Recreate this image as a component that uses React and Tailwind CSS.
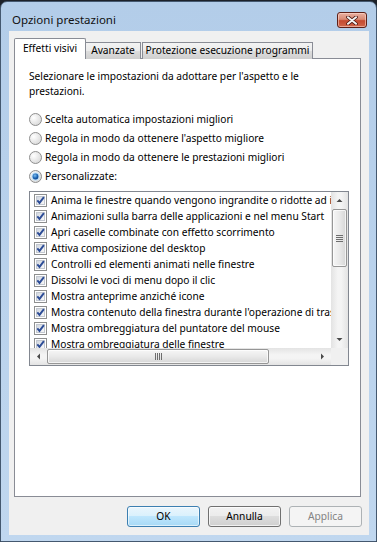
import React from "react";

function Check() {
  return (
    <svg width="13" height="13" viewBox="0 0 13 13" className="shrink-0">
      <defs>
        <linearGradient id="cbg" x1="0" y1="0" x2="1" y2="1">
          <stop offset="0" stopColor="#cfd5de" />
          <stop offset="1" stopColor="#fafafa" />
        </linearGradient>
      </defs>
      <rect x="0.5" y="0.5" width="12" height="12" fill="#fff" stroke="#8e8f8f" />
      <rect x="2.5" y="2.5" width="8" height="8" fill="url(#cbg)" stroke="#c3c8d0" />
      <path d="M3.3 6.4 L5.5 8.9 L9.9 3.2" fill="none" stroke="#2c4c96" strokeWidth="1.9" />
    </svg>
  );
}

function Radio({ on }) {
  return (
    <svg width="13" height="13" viewBox="0 0 13 13" className="shrink-0">
      <defs>
        <radialGradient id="rbg" cx="0.35" cy="0.35" r="0.8">
          <stop offset="0" stopColor="#ffffff" />
          <stop offset="1" stopColor="#d4d4d4" />
        </radialGradient>
        <radialGradient id="rdot" cx="0.4" cy="0.35" r="0.7">
          <stop offset="0" stopColor="#7fbdf0" />
          <stop offset="0.6" stopColor="#1d67b5" />
          <stop offset="1" stopColor="#0e3f86" />
        </radialGradient>
      </defs>
      <circle cx="6.5" cy="6.5" r="6" fill="url(#rbg)" stroke="#8f8f8f" />
      {on && <circle cx="6.5" cy="6.5" r="4" fill="#b7dcf7" />}
      {on && <circle cx="6.5" cy="6.5" r="2.9" fill="url(#rdot)" />}
    </svg>
  );
}

function Tri({ dir }) {
  const d = {
    up: "M0.5 4 L3.5 1 L6.5 4 Z",
    down: "M0.5 1 L3.5 4 L6.5 1 Z",
    left: "M4 0.5 L1 3.5 L4 6.5 Z",
    right: "M1 0.5 L4 3.5 L1 6.5 Z",
  }[dir];
  const vertical = dir === "up" || dir === "down";
  return (
    <svg width={vertical ? 7 : 5} height={vertical ? 5 : 7} viewBox={vertical ? "0 0 7 5" : "0 0 5 7"}>
      <path d={d} fill="#4a4a4a" />
    </svg>
  );
}

const items = [
  "Anima le finestre quando vengono ingrandite o ridotte ad icona",
  "Animazioni sulla barra delle applicazioni e nel menu Start",
  "Apri caselle combinate con effetto scorrimento",
  "Attiva composizione del desktop",
  "Controlli ed elementi animati nelle finestre",
  "Dissolvi le voci di menu dopo il clic",
  "Mostra anteprime anziché icone",
  "Mostra contenuto della finestra durante l'operazione di trascinamento",
  "Mostra ombreggiatura del puntatore del mouse",
  "Mostra ombreggiatura delle finestre",
  "Mostra rettangolo di selezione trasparente",
];

const radios = [
  ["Scelta automatica impostazioni migliori", false],
  ["Regola in modo da ottenere l'aspetto migliore", false],
  ["Regola in modo da ottenere le prestazioni migliori", false],
  ["Personalizzate:", true],
];

export default function App() {
  return (
    <div className="w-[377px] h-[542px] pt-[1px] bg-[#1c2129] overflow-hidden font-['Noto_Sans',sans-serif] text-[10.2px] text-black">
      <div className="h-[541px] rounded-t-[7px] border border-[#44586f] bg-[linear-gradient(#b3cde9,#c0d7ef)] flex flex-col">
        {/* title bar */}
        <div className="h-[29px] shrink-0 flex items-start justify-between pl-[11px] pr-[9px] pt-[10px]">
          <span className="text-[11.5px] leading-[16px] text-[#111]">Opzioni prestazioni</span>
          <div className="w-[30px] h-[16px] rounded-[3px] border border-[#5e2018] bg-[linear-gradient(#eab0a2,#d88a75_45%,#c4492f_55%,#d0674c)] shadow-[inset_0_0_0_1px_rgba(255,220,210,0.55)] flex items-center justify-center">
            <svg width="12" height="9" viewBox="0 0 12 9">
              <path d="M2 1.2 L10 7.8 M10 1.2 L2 7.8" stroke="#4a1510" strokeWidth="3.6" strokeLinecap="round" />
              <path d="M2 1.2 L10 7.8 M10 1.2 L2 7.8" stroke="#f4f4f4" strokeWidth="2" strokeLinecap="round" />
            </svg>
          </div>
        </div>

        {/* client area */}
        <div className="ml-[8px] mr-[7px] mb-[6px] flex-1 bg-[#f0f0f0] flex flex-col pt-[7px] pl-[5px]">
          {/* tabs */}
          <div className="relative z-10 -mb-[1px] flex items-end h-[21px]">
            <div className="h-[21px] w-[72px] border border-b-0 border-[#898c95] bg-white rounded-t-[2px] flex items-center justify-center pb-[1px]">
              Effetti visivi
            </div>
            <div className="h-[17px] w-[56px] -ml-[1px] border border-b-0 border-[#898c95] bg-[linear-gradient(#f3f3f3,#ebebeb_50%,#dddddd_50%,#cfcfcf)] flex items-center justify-center">
              Avanzate
            </div>
            <div className="h-[17px] w-[171px] ml-[1px] border border-b-0 border-[#898c95] bg-[linear-gradient(#f3f3f3,#ebebeb_50%,#dddddd_50%,#cfcfcf)] flex items-center justify-center">
              Protezione esecuzione programmi
            </div>
          </div>

          {/* panel */}
          <div className="mr-[8px] h-[439px] border border-[#898c95] bg-white pt-[10px] pl-[14px] pr-[11px]">
            <p className="leading-[15px]">
              Selezionare le impostazioni da adottare per l'aspetto e le
              <br />
              prestazioni.
            </p>
            <div className="mt-[11px] flex flex-col">
              {radios.map(([label, on]) => (
                <div key={label} className="h-[19px] flex items-center gap-[3px]">
                  <Radio on={on} />
                  <span className="leading-[19px]">{label}</span>
                </div>
              ))}
            </div>

            {/* listbox */}
            <div className="mt-[5px] w-[320px] h-[175px] border border-[#828790] bg-white flex flex-col">
              <div className="flex h-[156px]">
                <div className="flex-1 overflow-hidden pl-[4px]">
                  {items.map((t) => (
                    <div key={t} className="h-[16px] flex items-center gap-[4px] whitespace-nowrap">
                      <Check />
                      <span className="leading-[16px]">{t}</span>
                    </div>
                  ))}
                </div>
                {/* vertical scrollbar */}
                <div className="w-[17px] shrink-0 flex flex-col bg-[linear-gradient(90deg,#e3e3e3,#f4f4f4_40%,#f4f4f4_60%,#e3e3e3)]">
                  <div className="h-[17px] flex items-center justify-center">
                    <Tri dir="up" />
                  </div>
                  <div className="h-[58px] mx-[1px] rounded-[2px] border border-[#969696] bg-[linear-gradient(90deg,#f6f6f6,#e9e9e9_50%,#d6d6d6)] shadow-[inset_0_0_0_1px_rgba(255,255,255,0.7)] flex flex-col items-center justify-center gap-[1px]">
                    <div className="w-[7px] h-[1px] bg-[#6d6d6d]" />
                    <div className="w-[7px] h-[1px] bg-[#6d6d6d]" />
                    <div className="w-[7px] h-[1px] bg-[#6d6d6d]" />
                    <div className="w-[7px] h-[1px] bg-[#6d6d6d]" />
                  </div>
                  <div className="flex-1" />
                  <div className="h-[17px] flex items-center justify-center">
                    <Tri dir="down" />
                  </div>
                </div>
              </div>
              {/* horizontal scrollbar */}
              <div className="flex h-[17px]">
                <div className="flex-1 flex bg-[linear-gradient(#e3e3e3,#f4f4f4_40%,#f4f4f4_60%,#e3e3e3)]">
                  <div className="w-[17px] flex items-center justify-center">
                    <Tri dir="left" />
                  </div>
                  <div className="w-[222px] my-[1px] rounded-[2px] border border-[#969696] bg-[linear-gradient(#f6f6f6,#e9e9e9_50%,#d6d6d6)] shadow-[inset_0_0_0_1px_rgba(255,255,255,0.7)] flex items-center justify-center gap-[1px]">
                    <div className="w-[1px] h-[7px] bg-[#6d6d6d]" />
                    <div className="w-[1px] h-[7px] bg-[#6d6d6d]" />
                    <div className="w-[1px] h-[7px] bg-[#6d6d6d]" />
                    <div className="w-[1px] h-[7px] bg-[#6d6d6d]" />
                  </div>
                  <div className="flex-1" />
                  <div className="w-[17px] flex items-center justify-center">
                    <Tri dir="right" />
                  </div>
                </div>
                <div className="w-[17px] bg-[#f0f0f0]" />
              </div>
            </div>
          </div>

          {/* buttons */}
          <div className="mt-[9px] mr-[7px] flex justify-end gap-[8px]">
            <button className="w-[73px] h-[21px] rounded-[3px] border border-[#3c7fb1] bg-[linear-gradient(#eaf6fd,#d9f0fc_50%,#bee6fd_50%,#a7d9f5)] shadow-[inset_0_0_0_1px_rgba(255,255,255,0.6)] leading-none">
              OK
            </button>
            <button className="w-[73px] h-[21px] rounded-[3px] border border-[#707070] bg-[linear-gradient(#f2f2f2,#ebebeb_50%,#dddddd_50%,#cfcfcf)] shadow-[inset_0_0_0_1px_rgba(255,255,255,0.7)] leading-none">
              Annulla
            </button>
            <button className="w-[73px] h-[21px] rounded-[3px] border border-[#adb2b5] bg-[#f4f4f4] text-[#838383] leading-none">
              Applica
            </button>
          </div>
        </div>
      </div>
    </div>
  );
}
